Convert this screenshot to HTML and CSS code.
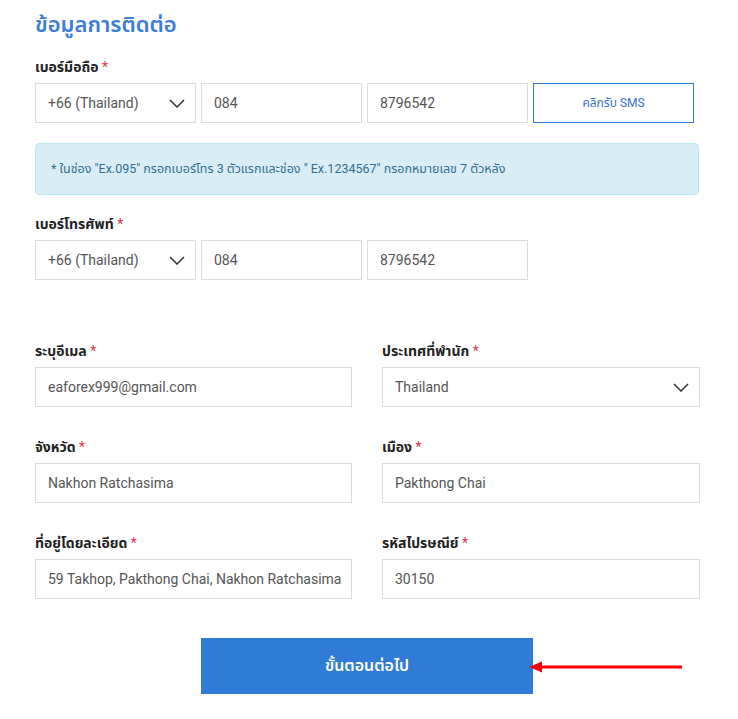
FILE: index.html
```html
<!DOCTYPE html>
<html lang="th">
<head>
<meta charset="utf-8">
<title>ข้อมูลการติดต่อ</title>
<link rel="stylesheet" href="styles.css">
</head>
<body>
<div class="page">
  <h1 class="title">ข้อมูลการติดต่อ</h1>

  <div class="label">เบอร์มือถือ <span class="req">*</span></div>
  <div class="phone-row">
    <div class="field select">+66 (Thailand)
      <svg class="chev" width="16" height="9" viewBox="0 0 16 9"><path d="M1 1 L8 8 L15 1" fill="none" stroke="#333" stroke-width="1.5"/></svg>
    </div>
    <div class="field">084</div>
    <div class="field">8796542</div>
    <div class="sms-btn">คลิกรับ SMS</div>
  </div>

  <div class="info">* ในช่อง "Ex.095" กรอกเบอร์โทร 3 ตัวแรกและช่อง " Ex.1234567" กรอกหมายเลข 7 ตัวหลัง</div>

  <div class="label">เบอร์โทรศัพท์ <span class="req">*</span></div>
  <div class="phone-row">
    <div class="field select">+66 (Thailand)
      <svg class="chev" width="16" height="9" viewBox="0 0 16 9"><path d="M1 1 L8 8 L15 1" fill="none" stroke="#333" stroke-width="1.5"/></svg>
    </div>
    <div class="field">084</div>
    <div class="field">8796542</div>
  </div>

  <div class="grid2">
    <div class="group">
      <div class="label">ระบุอีเมล <span class="req">*</span></div>
      <div class="field">eaforex999@gmail.com</div>
    </div>
    <div class="group">
      <div class="label">ประเทศที่พำนัก <span class="req">*</span></div>
      <div class="field select">Thailand
        <svg class="chev" width="16" height="9" viewBox="0 0 16 9"><path d="M1 1 L8 8 L15 1" fill="none" stroke="#333" stroke-width="1.5"/></svg>
      </div>
    </div>
    <div class="group">
      <div class="label">จังหวัด <span class="req">*</span></div>
      <div class="field">Nakhon Ratchasima</div>
    </div>
    <div class="group">
      <div class="label">เมือง <span class="req">*</span></div>
      <div class="field">Pakthong Chai</div>
    </div>
    <div class="group">
      <div class="label">ที่อยู่โดยละเอียด <span class="req">*</span></div>
      <div class="field">59 Takhop, Pakthong Chai, Nakhon Ratchasima</div>
    </div>
    <div class="group">
      <div class="label">รหัสไปรษณีย์ <span class="req">*</span></div>
      <div class="field">30150</div>
    </div>
  </div>

  <div class="actions">
    <div class="next-btn">ขั้นตอนต่อไป</div>
    <svg class="arrow" width="160" height="14" viewBox="0 0 160 14">
      <path d="M10 7 L153 7" stroke="#ff0000" stroke-width="3"/>
      <path d="M0 7 L13 1.5 L13 12.5 Z" fill="#ff0000"/>
    </svg>
  </div>
</div>
</body>
</html>
```

FILE: styles.css
```css
* { box-sizing: border-box; }
html, body { margin: 0; padding: 0; background: #fff; }
body {
  font-family: Roboto, "Noto Sans Thai", "Noto Sans", "Liberation Sans", sans-serif;
  color: #333;
}
.page {
  width: 665px;
  margin-left: 35px;
  padding-top: 10px;
}
.title {
  margin: 0 0 17px 0;
  font-size: 22px;
  line-height: 30px;
  font-weight: 600;
  color: #3b7dd8;
}
.label {
  font-size: 14px;
  line-height: 20px;
  font-weight: 700;
  color: #222;
  margin-bottom: 6px;
  white-space: nowrap;
}
.req { color: #e1334a; font-weight: 400; }
.phone-row {
  display: grid;
  grid-template-columns: repeat(4, 161px);
  column-gap: 5px;
  margin-bottom: 20px;
}
.field {
  position: relative;
  height: 40px;
  border: 1px solid #dcdcdc;
  background: #fff;
  padding: 0 12px;
  font-size: 14px;
  line-height: 38px;
  color: #555;
  white-space: nowrap;
  overflow: hidden;
}
.select { padding-right: 36px; }
.chev { position: absolute; right: 10px; top: 15px; }
.sms-btn {
  height: 40px;
  border: 1px solid #2f7bd6;
  color: #3a6fcf;
  font-size: 12px;
  line-height: 38px;
  text-align: center;
}
.info {
  width: 664px;
  height: 52px;
  background: #d9edf7;
  border: 1px solid #bce8f1;
  border-radius: 4px;
  color: #31708f;
  font-size: 12.5px;
  line-height: 50px;
  padding-left: 15px;
  margin-bottom: 19px;
}
.grid2 {
  display: grid;
  grid-template-columns: 317px 318px;
  column-gap: 30px;
  margin-top: 61px;
}
.group { margin-bottom: 30px; }
.group:nth-last-child(-n+2) { margin-bottom: 0; }
.actions {
  position: relative;
  margin-top: 39px;
  padding-left: 166px;
}
.next-btn {
  width: 332px;
  height: 56px;
  background: #2f7bd6;
  color: #fff;
  font-size: 16px;
  font-weight: 600;
  line-height: 56px;
  text-align: center;
}
.arrow { position: absolute; left: 494px; top: 22px; }
```
